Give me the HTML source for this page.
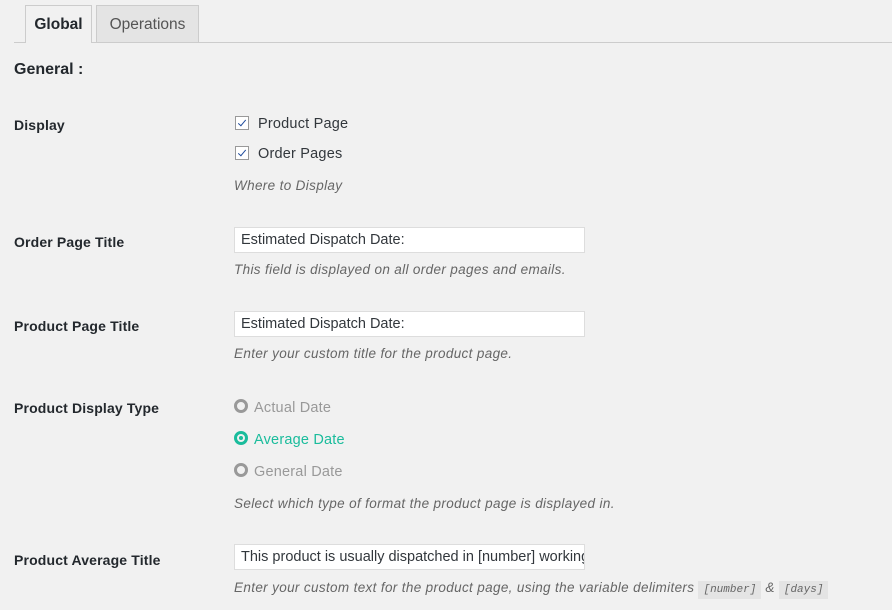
<!DOCTYPE html><html><head><style>
body{margin:0;width:892px;height:610px;background:#f1f1f1;font-family:"Liberation Sans",sans-serif;color:#23282d;position:relative;overflow:hidden}
.a{position:absolute;white-space:nowrap}
.tab{position:absolute;top:5px;height:37px;border:1px solid #ccc;border-bottom:none;font-size:15.5px;line-height:38px;text-align:center;box-sizing:border-box}
.lbl{position:absolute;left:14px;font-size:14px;font-weight:bold;color:#23282d;letter-spacing:.15px}
.d{position:absolute;left:234px;font-size:13.5px;font-style:italic;color:#666;letter-spacing:.35px}
.inp{position:absolute;left:234px;width:351px;height:26px;box-sizing:border-box;border:1px solid #ddd;background:#fff;font-size:14.5px;line-height:24px;padding-left:6px;color:#32373c;overflow:hidden;white-space:nowrap}
.cb{position:absolute;left:235px;width:12px;height:12px;border:1px solid #999;background:#fff}
.cb:after{content:"";position:absolute;left:3.5px;top:1px;width:3px;height:7px;border:solid #1e4a9b;border-width:0 1.5px 1.5px 0;transform:rotate(40deg)}
.rd{position:absolute;left:234px;width:8px;height:8px;border:3px solid #999;border-radius:50%}
.opt{position:absolute;left:254px;font-size:14.5px;letter-spacing:.2px}
</style></head><body>
<div class="a" style="left:14px;right:0;top:42px;border-top:1px solid #ccc"></div>
<div class="tab" style="left:25px;width:67px;background:#f1f1f1;height:38px;font-weight:bold;color:#23282d">Global</div>
<div class="tab" style="left:96px;width:103px;background:#e4e4e4;color:#555">Operations</div>
<div class="a" style="left:14px;top:61px;font-size:16px;font-weight:bold">General :</div>
<div class="lbl" style="top:117px">Display</div>
<div class="cb" style="top:116px"></div><div class="opt" style="top:116px;left:258px;color:#32373c">Product Page</div>
<div class="cb" style="top:146px"></div><div class="opt" style="top:146px;left:258px;color:#32373c">Order Pages</div>
<div class="d" style="top:178px">Where to Display</div>
<div class="lbl" style="top:234px">Order Page Title</div>
<div class="inp" style="top:227px">Estimated Dispatch Date:</div>
<div class="d" style="top:262px">This field is displayed on all order pages and emails.</div>
<div class="lbl" style="top:318px">Product Page Title</div>
<div class="inp" style="top:311px">Estimated Dispatch Date:</div>
<div class="d" style="top:346px">Enter your custom title for the product page.</div>
<div class="lbl" style="top:400px">Product Display Type</div>
<div class="rd" style="top:399px"></div><div class="opt" style="top:400px;color:#999">Actual Date</div>
<div class="rd" style="top:431px;border-color:#1abc9c"></div><div class="a" style="left:239px;top:436px;width:4px;height:4px;border-radius:50%;background:#1abc9c"></div><div class="opt" style="top:432px;color:#1abc9c">Average Date</div>
<div class="rd" style="top:463px"></div><div class="opt" style="top:464px;color:#999">General Date</div>
<div class="d" style="top:496px">Select which type of format the product page is displayed in.</div>
<div class="lbl" style="top:552px">Product Average Title</div>
<div class="inp" style="top:544px">This product is usually dispatched in [number] working days</div>
<div class="d" style="top:580px">Enter your custom text for the product page, using the variable delimiters <span style="font-family:'Liberation Mono',monospace;font-size:11px;background:#e4e4e4;padding:3px 5px;letter-spacing:0">[number]</span> &amp; <span style="font-family:'Liberation Mono',monospace;font-size:11px;background:#e4e4e4;padding:3px 5px;letter-spacing:0">[days]</span></div>
</body></html>
